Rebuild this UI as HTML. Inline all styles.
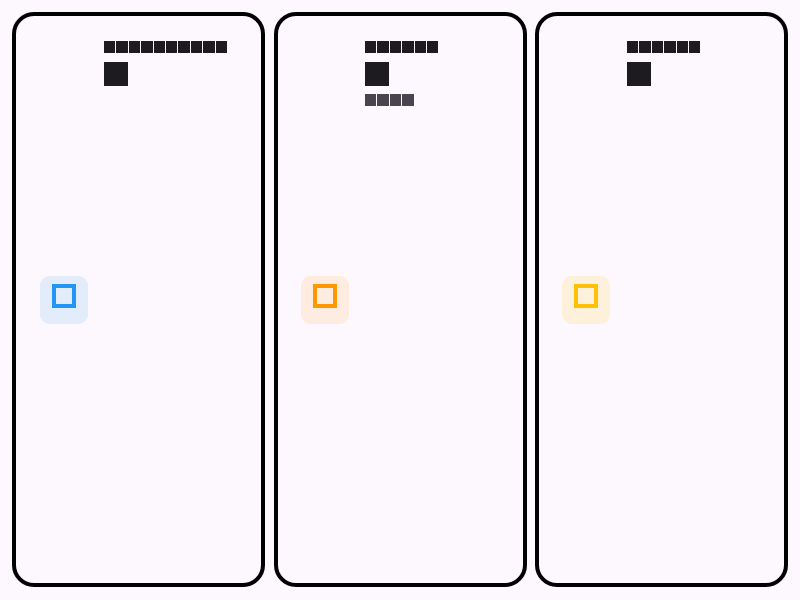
<!DOCTYPE html>
<html><head><style>
body{margin:0;width:800px;height:600px;background:#fdf8fd;position:relative;overflow:hidden;font-family:"Liberation Sans",sans-serif}
.card{position:absolute;top:12px;width:245px;height:567px;border:4px solid #000;border-radius:22px;background:#fdf8fd}
.row{position:absolute;display:flex}
.row span{display:inline-block;width:11.4px;height:12px;background:#1d1b20;margin-right:1px}
.big{position:absolute;width:24px;height:24px;background:#1d1b20}
.sub span{background:#49454f}
.ic{position:absolute;left:24px;top:260px;width:48px;height:48px;border-radius:10px}
.ic div{position:absolute;left:12px;top:8px;width:16px;height:16px;border:4px solid}
</style></head><body>
<div class="card" style="left:12px">
<div class="row" style="left:88px;top:25px"><span></span><span></span><span></span><span></span><span></span><span></span><span></span><span></span><span></span><span></span></div>
<div class="big" style="left:88px;top:46px"></div>
<div class="ic" style="background:#e3ecfb"><div style="border-color:#2196f3"></div></div>
</div>
<div class="card" style="left:274px">
<div class="row" style="left:87px;top:25px"><span></span><span></span><span></span><span></span><span></span><span></span></div>
<div class="big" style="left:87px;top:46px"></div>
<div class="row sub" style="left:87px;top:78px"><span></span><span></span><span></span><span></span></div>
<div class="ic" style="background:#fdecdf;left:23px"><div style="border-color:#ff9800"></div></div>
</div>
<div class="card" style="left:535px">
<div class="row" style="left:88px;top:25px"><span></span><span></span><span></span><span></span><span></span><span></span></div>
<div class="big" style="left:88px;top:46px"></div>
<div class="ic" style="background:#fdf1dc;left:23px"><div style="border-color:#ffc107"></div></div>
</div>
</body></html>
